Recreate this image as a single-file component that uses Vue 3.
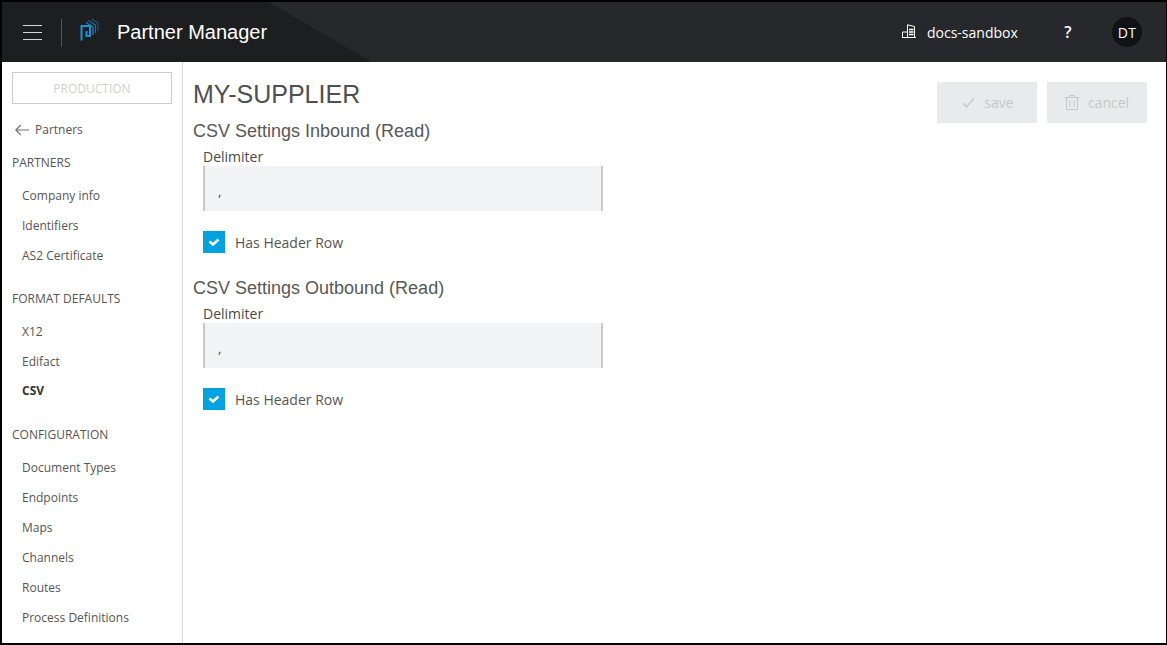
<script setup>
const groups = [
  { title: 'PARTNERS', items: ['Company info', 'Identifiers', 'AS2 Certificate'] },
  { title: 'FORMAT DEFAULTS', items: ['X12', 'Edifact', 'CSV'] },
  { title: 'CONFIGURATION', items: ['Document Types', 'Endpoints', 'Maps', 'Channels', 'Routes', 'Process Definitions'] }
]
const sections = ['CSV Settings Inbound (Read)', 'CSV Settings Outbound (Read)']
</script>

<template>
  <div class="frame">
    <header class="topbar">
      <div class="wedge"></div>
      <button class="burger" aria-label="menu"><span></span><span></span><span></span></button>
      <div class="divider"></div>
      <svg class="logo" width="20" height="22" viewBox="0 0 20 22" fill="none" stroke="#1296d8">
        <path d="M1.500 21.500V7H10V17H6.500V12" stroke-width="2" />
        <path d="M6 3.500L13 8V16" stroke-width="1.300" opacity=".85" />
        <path d="M8.500 1.500L15.500 6V14" stroke-width="1.200" opacity=".7" />
        <path d="M11.500 0L18 4V12" stroke-width="1.100" opacity=".55" />
      </svg>
      <div class="product">Partner Manager</div>
      <div class="spacer"></div>
      <svg class="org" width="14" height="14" viewBox="0 0 14 14" fill="none" stroke="#fff" stroke-width="1">
        <path d="M.5 13.500V8H5.500M5.500 13.500V.8L12.500 2.500V13.500M0 13.500H14" />
        <path d="M7 5.500H11.500M7 8H11.500M7 10.500H11.500" stroke-width="1.400" />
      </svg>
      <div class="tenant">docs-sandbox</div>
      <div class="help">?</div>
      <div class="avatar">DT</div>
    </header>
    <div class="body">
      <aside class="side">
        <div class="env">PRODUCTION</div>
        <div class="back">
          <svg width="14" height="12" viewBox="0 0 14 12" fill="none" stroke="#6f6f6f" stroke-width="1.100">
            <path d="M14 6H.8M5.800 1L.8 6L5.800 11" />
          </svg>
          <span>Partners</span>
        </div>
        <section v-for="g in groups" :key="g.title" class="group">
          <div class="group-title">{{ g.title }}</div>
          <a v-for="i in g.items" :key="i" class="link" :class="{ active: i === 'CSV' }">{{ i }}</a>
        </section>
      </aside>
      <main class="main">
        <div class="actions">
          <button class="act">
            <svg width="13" height="11" viewBox="0 0 13 11" fill="none" stroke="#c6c8ca" stroke-width="1.500"><path d="M1 6L4.500 10L12 1" /></svg>
            save
          </button>
          <button class="act">
            <svg width="14" height="15" viewBox="0 0 14 15" fill="none" stroke="#c6c8ca" stroke-width="1"><path d="M0 2.500H14M4.500 2.500V.5H9.500V2.500M1.500 2.500V14.500H12.500V2.500M5 5V12M9 5V12" /></svg>
            cancel
          </button>
        </div>
        <h1 class="title">MY-SUPPLIER</h1>
        <section v-for="s in sections" :key="s" class="block">
          <h2 class="sub">{{ s }}</h2>
          <label class="lbl">Delimiter</label>
          <div class="field">,</div>
          <div class="check">
            <span class="box">
              <svg width="12" height="9" viewBox="0 0 12 9" fill="none" stroke="#fff" stroke-width="2.600"><path d="M1.500 3.500L5 6.500L10.500 1.500" /></svg>
            </span>
            <span>Has Header Row</span>
          </div>
        </section>
      </main>
    </div>
  </div>
</template>

<style scoped>
.frame {
  width: 1167px;
  height: 645px;
  box-sizing: border-box;
  border: solid #000;
  border-width: 2px 1px 2px 2px;
  display: flex;
  flex-direction: column;
  overflow: hidden;
  background: #fff;
  font-family: "Open Sans", sans-serif;
  color: #4a4a4a;
}
.topbar {
  position: relative;
  height: 60px;
  flex: none;
  display: flex;
  align-items: center;
  background: #1c1e1f;
  color: #fff;
}
.wedge {
  position: absolute;
  inset: 0;
  background: #26282b;
  clip-path: polygon(266px 0, 100% 0, 100% 100%, 370px 100%);
}
.topbar > *:not(.wedge) { position: relative; }
.burger {
  margin: 1px 0 0 21px;
  width: 19px;
  height: 15px;
  padding: 0;
  border: 0;
  background: none;
  display: flex;
  flex-direction: column;
  justify-content: space-between;
}
.burger span { display: block; height: 1px; background: #d8d8d8; }
.divider { width: 1px; height: 28px; background: #55585a; margin: 2px 0 0 19px; }
.logo { margin-left: 18px; margin-top: -4px; }
.product {
  margin-left: 17px;
  font: 20px "Liberation Sans", Arial, sans-serif;
}
.spacer { flex: 1; }
.org { margin: -2px 11px 0 0; }
.tenant { font-size: 14px; font-weight: 500; width: 90px; white-space: nowrap; }
.help { margin-left: 43px; width: 16px; font-size: 16px; font-weight: 600; text-align: center; }
.avatar {
  margin-left: 36px;
  margin-right: 24px;
  width: 30px;
  height: 30px;
  border-radius: 50%;
  background: #111213;
  display: flex;
  align-items: center;
  justify-content: center;
  font-size: 14px;
  font-weight: 400;
  letter-spacing: .3px;
}
.body { flex: 1; display: flex; min-height: 0; }
.side {
  width: 181px;
  flex: none;
  box-sizing: border-box;
  border-right: 1px solid #d9d9d9;
  padding: 10px 0 0 10px;
}
.env {
  width: 160px;
  height: 32px;
  box-sizing: border-box;
  border: 1px solid #ccc;
  display: flex;
  align-items: center;
  justify-content: center;
  font-size: 12px;
  font-weight: 500;
  color: #d0d0d0;
}
.back {
  display: flex;
  align-items: center;
  gap: 6px;
  margin: 16px 0 0 3px;
  height: 20px;
  font-size: 12px;
  line-height: 20px;
  color: #555;
}
.group { margin-bottom: 18px; }
.back + .group { margin-top: 13px; }
.group-title { font-size: 12px; line-height: 20px; color: #555; margin-bottom: 8px; }
.link {
  display: block;
  height: 30px;
  line-height: 30px;
  margin-left: 10px;
  font-size: 12px;
  color: #555;
}
.link.active { font-weight: 700; color: #333; line-height: 28px; }
.main { position: relative; flex: 1; padding: 16px 0 0 10px; }
.actions {
  position: absolute;
  top: 20px;
  right: 19px;
  display: flex;
  gap: 10px;
}
.act {
  width: 100px;
  height: 41px;
  border: 0;
  padding: 0;
  background: #e9eaeb;
  color: #c6c8ca;
  font: 500 14px "Open Sans", sans-serif;
  display: flex;
  align-items: center;
  justify-content: center;
  gap: 9px;
}
.act:first-child { padding-left: 2px; }
.title {
  margin: 0;
  font: 400 25px/32px "Liberation Sans", Arial, sans-serif;
  color: #505050;
}
.sub {
  margin: 23px 0 0;
  font: 400 18px/24px "Liberation Sans", Arial, sans-serif;
  color: #585858;
}
.title + .block .sub { margin-top: 9px; }
.lbl {
  display: block;
  margin: 4px 0 0 10px;
  font-size: 14px;
  line-height: 19px;
  color: #4a4a4a;
}
.field {
  margin-left: 10px;
  width: 400px;
  height: 45px;
  box-sizing: border-box;
  background: #f3f4f6;
  border: solid #c8c8c8;
  border-width: 0 2px;
  padding: 15px 13px 0;
  font-size: 13px;
  line-height: 20px;
}
.check {
  display: flex;
  align-items: center;
  gap: 10px;
  margin: 20px 0 0 10px;
  height: 22px;
  font-size: 14px;
  color: #555;
}
.box {
  width: 22px;
  height: 22px;
  background: #00a3e0;
  display: flex;
  align-items: center;
  justify-content: center;
}
</style>
<style>
html, body { margin: 0; overflow: hidden; }
</style>
